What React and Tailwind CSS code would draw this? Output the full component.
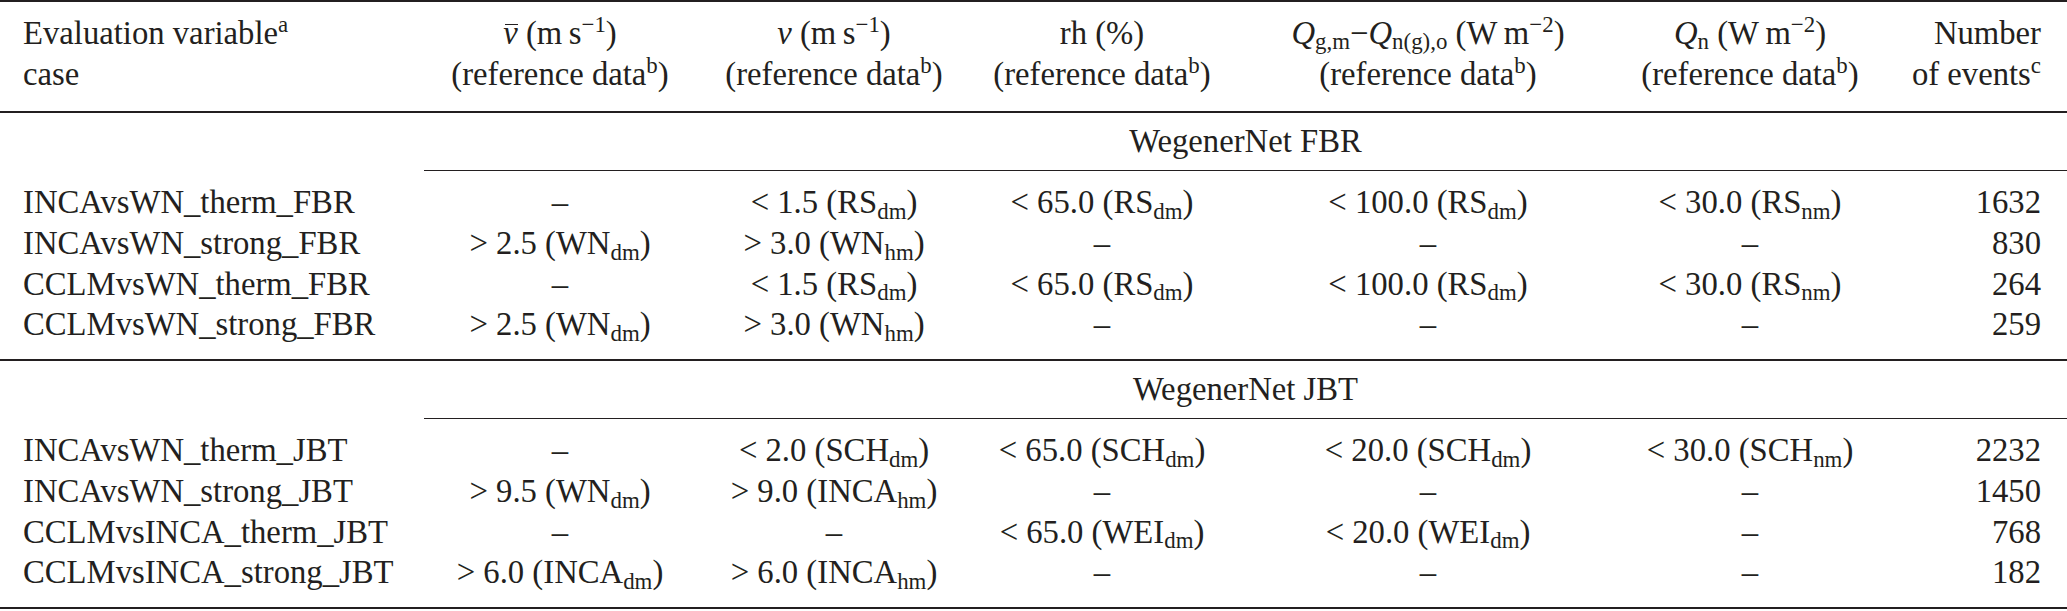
import React from "react";

const GRID =
  "grid grid-cols-[424px_272px_276px_260px_392px_252px_191px] whitespace-nowrap";

const S = ({ children }) => <sub className="text-[0.7em]">{children}</sub>;
const P = ({ children }) => <sup className="text-[0.7em]">{children}</sup>;
const Q = () => <span className="italic">Q</span>;
const Vbar = () => (
  <span className="relative italic">
    v
    <span className="absolute left-[0.06em] right-[0.0em] top-[0.29em] h-[1.5px] bg-[#231f20]" />
  </span>
);

const C = ({ children }) => (
  <div className="flex justify-center">
    <span>{children}</span>
  </div>
);
const L = ({ children }) => <div className="pl-[23px]">{children}</div>;
const R = ({ children }) => (
  <div className="flex justify-end pr-[26px]">
    <span>{children}</span>
  </div>
);

const D = "–";

const lt = (n, st, sb) => (
  <>
    {"< " + n + " ("}
    {st}
    <S>{sb}</S>)
  </>
);
const gt = (n, st, sb) => (
  <>
    {"> " + n + " ("}
    {st}
    <S>{sb}</S>)
  </>
);

const fbr = [
  ["INCAvsWN_therm_FBR", D, lt("1.5", "RS", "dm"), lt("65.0", "RS", "dm"), lt("100.0", "RS", "dm"), lt("30.0", "RS", "nm"), "1632"],
  ["INCAvsWN_strong_FBR", gt("2.5", "WN", "dm"), gt("3.0", "WN", "hm"), D, D, D, "830"],
  ["CCLMvsWN_therm_FBR", D, lt("1.5", "RS", "dm"), lt("65.0", "RS", "dm"), lt("100.0", "RS", "dm"), lt("30.0", "RS", "nm"), "264"],
  ["CCLMvsWN_strong_FBR", gt("2.5", "WN", "dm"), gt("3.0", "WN", "hm"), D, D, D, "259"],
];

const jbt = [
  ["INCAvsWN_therm_JBT", D, lt("2.0", "SCH", "dm"), lt("65.0", "SCH", "dm"), lt("20.0", "SCH", "dm"), lt("30.0", "SCH", "nm"), "2232"],
  ["INCAvsWN_strong_JBT", gt("9.5", "WN", "dm"), gt("9.0", "INCA", "hm"), D, D, D, "1450"],
  ["CCLMvsINCA_therm_JBT", D, D, lt("65.0", "WEI", "dm"), lt("20.0", "WEI", "dm"), D, "768"],
  ["CCLMvsINCA_strong_JBT", gt("6.0", "INCA", "dm"), gt("6.0", "INCA", "hm"), D, D, D, "182"],
];

function Row({ r }) {
  return (
    <div className={GRID + " h-[40.7px] leading-[40.7px]"}>
      <L>{r[0]}</L>
      <C>{r[1]}</C>
      <C>{r[2]}</C>
      <C>{r[3]}</C>
      <C>{r[4]}</C>
      <C>{r[5]}</C>
      <R>{r[6]}</R>
    </div>
  );
}

function Group({ label, rows }) {
  return (
    <div className="flex flex-col">
      <div className={GRID + " mt-[8.5px] h-[41px] leading-[41px]"}>
        <div />
        <div className="col-span-6 flex justify-center">
          <span>{label}</span>
        </div>
      </div>
      <div className="mt-[7.5px] ml-[424px] h-[1.2px] bg-[#231f20]" />
      <div className="mt-[11.5px] flex flex-col">
        {rows.map((r, i) => (
          <Row key={i} r={r} />
        ))}
      </div>
    </div>
  );
}

export default function App() {
  return (
    <div className="w-[2067px] h-[611px] overflow-hidden bg-white text-[#231f20] font-['Liberation_Serif','Times_New_Roman',serif] text-[32.7px]">
      <div className="h-[2px] bg-[#231f20]" />
      <div className={GRID + " pt-[10.5px] leading-[41px]"}>
        <div className="flex flex-col pl-[23px]">
          <div>
            Evaluation variable<P>a</P>
          </div>
          <div>case</div>
        </div>
        <div className="flex flex-col items-center">
          <div>
            <Vbar /> (m{"\u2009"}s<P>−1</P>)
          </div>
          <div>
            (reference data<P>b</P>)
          </div>
        </div>
        <div className="flex flex-col items-center">
          <div>
            <span className="italic">v</span> (m{"\u2009"}s<P>−1</P>)
          </div>
          <div>
            (reference data<P>b</P>)
          </div>
        </div>
        <div className="flex flex-col items-center">
          <div>rh (%)</div>
          <div>
            (reference data<P>b</P>)
          </div>
        </div>
        <div className="flex flex-col items-center">
          <div>
            <Q />
            <S>g,m</S>−<Q />
            <S>n(g),o</S> (W{"\u2009"}m<P>−2</P>)
          </div>
          <div>
            (reference data<P>b</P>)
          </div>
        </div>
        <div className="flex flex-col items-center">
          <div>
            <Q />
            <S>n</S> (W{"\u2009"}m<P>−2</P>)
          </div>
          <div>
            (reference data<P>b</P>)
          </div>
        </div>
        <div className="flex flex-col items-end pr-[26px]">
          <div>Number</div>
          <div>
            of events<P>c</P>
          </div>
        </div>
      </div>
      <div className="mt-[16.5px] h-[1.6px] bg-[#231f20]" />
      <Group label="WegenerNet FBR" rows={fbr} />
      <div className="mt-[14px] h-[1.6px] bg-[#231f20]" />
      <Group label="WegenerNet JBT" rows={jbt} />
      <div className="mt-[14px] h-[2px] bg-[#231f20]" />
    </div>
  );
}
